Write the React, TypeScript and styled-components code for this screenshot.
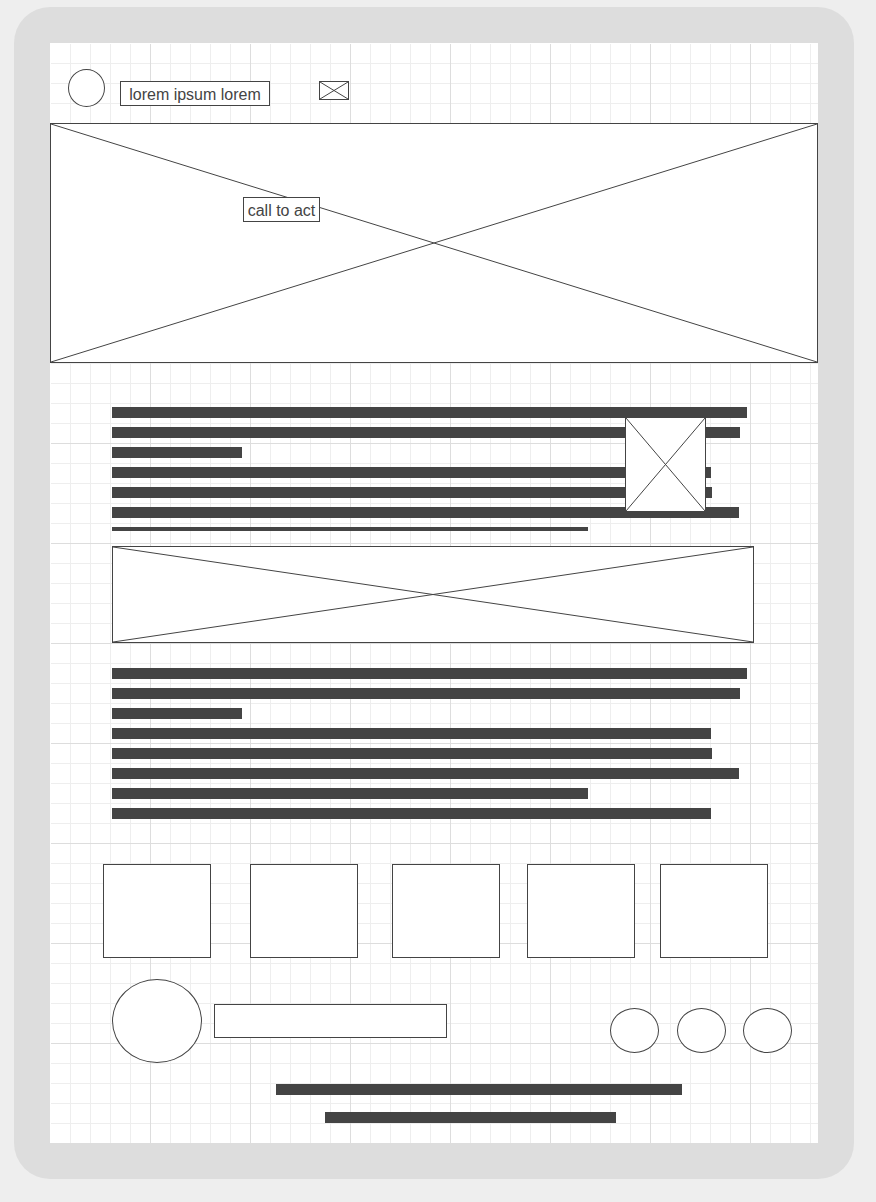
import React from "react";
import styled, { createGlobalStyle } from "styled-components";

const INK = "#444";
const PAPER = "#fff";

const GlobalStyle = createGlobalStyle`
  * { box-sizing: border-box; }
  body {
    margin: 0;
    background: #eee;
    color: ${INK};
    font: 16px/25px "Liberation Sans", Arial, sans-serif;
  }
`;

const Page = styled.div`
  padding: 7px 22px 23px 14px;
`;

const Tablet = styled.div`
  padding: 36px;
  border-radius: 36px;
  background: #ddd;
`;

/* Graph paper: the first two layers hide the grid lines on the top and left edges. */
const Screen = styled.div`
  padding-bottom: 20px;
  background:
    linear-gradient(${PAPER}, ${PAPER}) 0 0 / 1px 100% no-repeat,
    linear-gradient(${PAPER}, ${PAPER}) 0 0 / 100% 1px no-repeat,
    linear-gradient(#ddd 1px, transparent 1px) 0 0 / 100px 100px,
    linear-gradient(90deg, #ddd 1px, transparent 1px) 0 0 / 100px 100px,
    linear-gradient(#eee 1px, transparent 1px) 0 0 / 20px 20px,
    linear-gradient(90deg, #eee 1px, transparent 1px) 0 0 / 20px 20px,
    ${PAPER};
`;

const Header = styled.header`
  display: flex;
  align-items: flex-start;
  height: 80px;
  padding: 26px 18px 0;
`;

const Ellipse = styled.div<{ $width: number; $height: number }>`
  flex: none;
  width: ${(p) => p.$width}px;
  height: ${(p) => p.$height}px;
  border: 1px solid ${INK};
  border-radius: 50%;
  background: ${PAPER};
`;

const Title = styled.h1`
  width: 150px;
  height: 25px;
  margin: 12px 49px 0 15px;
  border: 1px solid ${INK};
  background: ${PAPER};
  font-size: 16px;
  font-weight: 400;
  line-height: 25px;
  text-align: center;
  white-space: nowrap;
`;

const CallToAct = styled.button`
  position: absolute;
  top: 73px;
  left: 192px;
  width: 77px;
  height: 25px;
  padding: 0;
  border: 1px solid ${INK};
  background: ${PAPER};
  color: inherit;
  font: inherit;
  line-height: 25px;
  white-space: nowrap;
`;

const ImageFrame = styled.div`
  position: relative;
  border: 1px solid ${INK};
  background: ${PAPER};
`;

const Cross = styled.svg`
  display: block;
  width: 100%;
  height: 100%;
  stroke: ${INK};
  stroke-width: 1;
`;

const MenuImage = styled(ImageFrame)`
  width: 30px;
  height: 19px;
  margin-top: 12px;
`;

const Hero = styled(ImageFrame)`
  height: 240px;
`;

const Banner = styled(ImageFrame)`
  height: 97px;
`;

const Thumbnail = styled(ImageFrame)`
  position: absolute;
  top: 10px;
  right: 48px;
  width: 81px;
  height: 95px;
`;

const Article = styled.main`
  display: flex;
  flex-direction: column;
  padding: 44px 64px 0 62px;
`;

const Intro = styled.section`
  position: relative;
  margin-bottom: 15px;
`;

const Lines = styled.div<{ $height?: number }>`
  display: flex;
  flex-direction: column;
  gap: 9px;
  height: ${(p) => (p.$height ? `${p.$height}px` : "auto")};
  overflow: hidden;
`;

const Body = styled.section`
  margin-top: 25px;
`;

const Bar = styled.div<{ $width: number; $indent?: number }>`
  flex: none;
  width: ${(p) => p.$width}px;
  max-width: 100%;
  height: 11px;
  margin-left: ${(p) => p.$indent ?? 0}px;
  background: ${INK};
`;

const Cards = styled.section`
  display: grid;
  grid-template-columns: 147fr 142fr 135fr 133fr 108fr;
  margin: 45px 50px 21px 53px;
`;

const Card = styled.div`
  width: 108px;
  height: 94px;
  border: 1px solid ${INK};
  background: ${PAPER};
`;

const Footer = styled.footer`
  display: flex;
  align-items: flex-start;
  gap: 12px;
  padding: 0 26px 0 62px;
`;

const Field = styled.div`
  width: 233px;
  height: 34px;
  margin-top: 25px;
  border: 1px solid ${INK};
  background: ${PAPER};
`;

const Social = styled.div`
  display: flex;
  justify-content: space-between;
  width: 182px;
  margin: 29px 0 0 auto;
`;

const Legal = styled.div`
  display: flex;
  flex-direction: column;
  gap: 17px;
  margin-top: 21px;
`;

function Crossed() {
  return (
    <Cross viewBox="0 0 100 100" preserveAspectRatio="none" aria-hidden="true">
      <line x1="0" y1="0" x2="100" y2="100" vectorEffect="non-scaling-stroke" />
      <line x1="0" y1="100" x2="100" y2="0" vectorEffect="non-scaling-stroke" />
    </Cross>
  );
}

const introLines = [635, 628, 130, 599, 600, 627, 476];
const bodyLines = [635, 628, 130, 599, 600, 627, 476, 599];

export default function App() {
  return (
    <>
      <GlobalStyle />
      <Page>
        <Tablet>
          <Screen>
            <Header>
              <Ellipse $width={37} $height={38} />
              <Title>lorem ipsum lorem</Title>
              <MenuImage>
                <Crossed />
              </MenuImage>
            </Header>
            <Hero>
              <Crossed />
              <CallToAct type="button">call to act</CallToAct>
            </Hero>
            <Article>
              <Intro>
                <Lines $height={124}>
                  {introLines.map((width, i) => (
                    <Bar key={i} $width={width} />
                  ))}
                </Lines>
                <Thumbnail>
                  <Crossed />
                </Thumbnail>
              </Intro>
              <Banner>
                <Crossed />
              </Banner>
              <Body>
                <Lines>
                  {bodyLines.map((width, i) => (
                    <Bar key={i} $width={width} />
                  ))}
                </Lines>
              </Body>
            </Article>
            <Cards>
              {[0, 1, 2, 3, 4].map((i) => (
                <Card key={i} />
              ))}
            </Cards>
            <Footer>
              <Ellipse $width={90} $height={84} />
              <Field />
              <Social>
                {[0, 1, 2].map((i) => (
                  <Ellipse key={i} $width={49} $height={45} />
                ))}
              </Social>
            </Footer>
            <Legal>
              <Bar $width={406} $indent={226} />
              <Bar $width={291} $indent={275} />
            </Legal>
          </Screen>
        </Tablet>
      </Page>
    </>
  );
}
